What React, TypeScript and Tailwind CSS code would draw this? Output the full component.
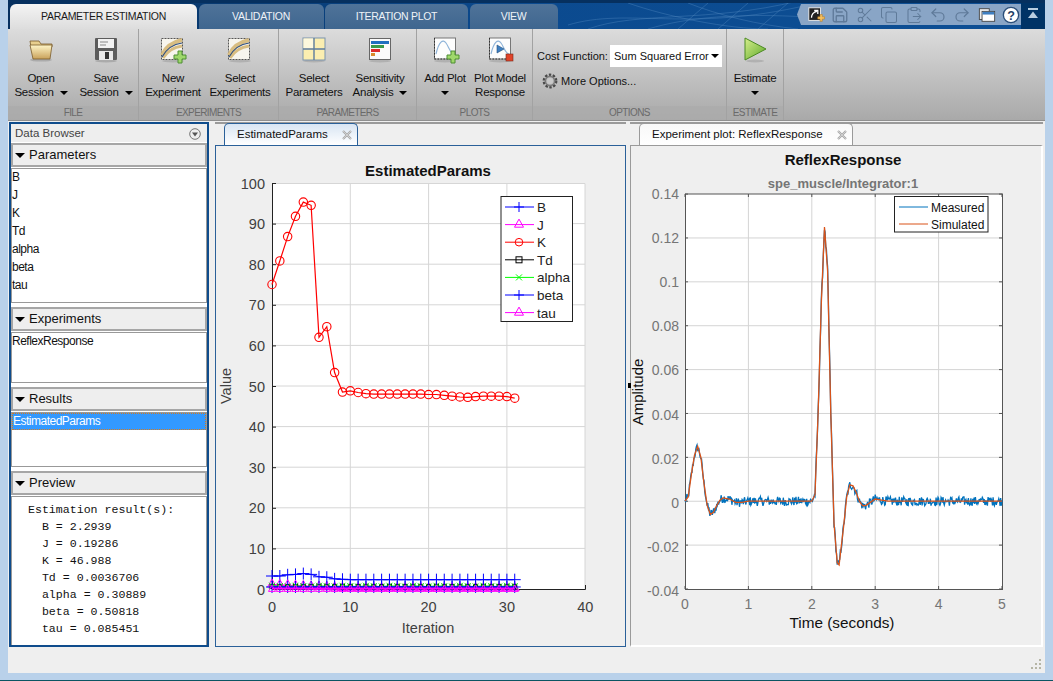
import React from "react";
import { Scissors, Copy, ClipboardPaste, Undo2, Redo2, Save } from "lucide-react";

const Caret = ({ className = "" }: { className?: string }) => (
  <span className={"inline-block w-0 h-0 border-l-[4px] border-r-[4px] border-t-[4px] border-l-transparent border-r-transparent border-t-black align-middle " + className} />
);

const Folder = () => (
  <svg width="32" height="32" viewBox="0 0 32 32">
    <defs>
      <linearGradient id="fd" x1="0" y1="0" x2="0" y2="1">
        <stop offset="0" stopColor="#fff6c8" />
        <stop offset="1" stopColor="#c9a15a" />
      </linearGradient>
    </defs>
    <ellipse cx="16" cy="27" rx="11" ry="1.6" fill="#8b8b8b" opacity="0.5" />
    <path d="M5 8h9l2 3h11v3H6z" fill="#e8cf8e" stroke="#7a5c2c" strokeWidth="0.8" />
    <path d="M5 12h22l-2 14H8z" fill="url(#fd)" stroke="#7a5c2c" strokeWidth="0.8" />
  </svg>
);

const Floppy = () => (
  <svg width="32" height="32" viewBox="0 0 32 32">
    <ellipse cx="16" cy="28" rx="11" ry="1.4" fill="#8b8b8b" opacity="0.5" />
    <rect x="5" y="5" width="22" height="22" rx="1" fill="#5c5c5c" />
    <rect x="8" y="6" width="16" height="9" fill="#f2f2f2" />
    <path d="M10 9h8M10 12h6" stroke="#888" strokeWidth="1" />
    <rect x="9" y="18" width="14" height="9" fill="#e8e8e8" />
    <rect x="15" y="19" width="4" height="7" fill="#333" />
  </svg>
);

const PlusMark = ({ x, y }: { x: number; y: number }) => (
  <path
    transform={`translate(${x} ${y})`}
    d="M4 0h4v4h4v4H8v4H4V8H0V4h4z"
    fill="#9fd86b"
    stroke="#4f8f35"
    strokeWidth="1"
  />
);

const Experiment = ({ plus }: { plus?: boolean }) => (
  <svg width="32" height="32" viewBox="0 0 32 32">
    <ellipse cx="16" cy="28" rx="11" ry="1.4" fill="#8b8b8b" opacity="0.4" />
    <rect x="4.5" y="5.5" width="21" height="21" fill="#f7f5ee" stroke="#555" strokeWidth="1" strokeDasharray="2 1" />
    <path d="M5 22C9 13 16 9 25 7" stroke="#d8bd82" strokeWidth="4" fill="none" />
    <path d="M6 25C11 17 17 14 25 13" stroke="#d8bd82" strokeWidth="3" fill="none" />
    <path d="M5 24C10 15 17 11 25 10" stroke="#2d4e80" strokeWidth="1.2" fill="none" />
    {plus && <PlusMark x={17} y={18} />}
  </svg>
);

const GridIcon = () => (
  <svg width="32" height="32" viewBox="0 0 32 32">
    <ellipse cx="16" cy="28" rx="11" ry="1.4" fill="#8b8b8b" opacity="0.4" />
    <rect x="5" y="5" width="22" height="22" fill="#fbeeb0" stroke="#7a94ad" />
    <rect x="5.5" y="5.5" width="10" height="10" fill="#fdf8dd" />
    <path d="M16 5v22M5 16h22" stroke="#5d7c9e" strokeWidth="1.4" />
  </svg>
);

const Bars = () => (
  <svg width="32" height="32" viewBox="0 0 32 32">
    <ellipse cx="16" cy="28" rx="11" ry="1.4" fill="#8b8b8b" opacity="0.4" />
    <rect x="5.5" y="5.5" width="21" height="21" fill="#fafafa" stroke="#666" />
    <rect x="7" y="8" width="18" height="3" fill="#1f6fc0" />
    <rect x="7" y="12" width="13" height="3" fill="#3a9a4a" />
    <rect x="7" y="16" width="9" height="3" fill="#dd2c2c" />
    <rect x="7" y="20" width="4" height="3" fill="#d98a2b" />
  </svg>
);

const PlotBase = ({ children }: { children?: React.ReactNode }) => (
  <svg width="32" height="32" viewBox="0 0 32 32">
    <ellipse cx="16" cy="28" rx="11" ry="1.4" fill="#8b8b8b" opacity="0.4" />
    <rect x="5.5" y="5" width="21" height="21" fill="#fdfdfd" stroke="#777" />
    <path d="M5.5 26h21M5.5 5v21" stroke="#333" strokeWidth="1" strokeDasharray="1.5 1.5" />
    <path d="M7 21C10 8 14 6 17 10S21 20 25 21" stroke="#8fb4d9" strokeWidth="1.2" fill="none" />
    {children}
  </svg>
);

const Gear = () => (
  <svg width="18" height="18" viewBox="0 0 18 18">
    <circle cx="9" cy="9" r="6.2" fill="none" stroke="#4a4a4a" strokeWidth="2.4" strokeDasharray="2.4 1.5" />
    <circle cx="9" cy="9" r="4.6" fill="none" stroke="#7a7a7a" strokeWidth="1.6" />
    <circle cx="9" cy="9" r="3" fill="#c9c9c9" />
  </svg>
);

const Play = () => (
  <svg width="32" height="32" viewBox="0 0 32 32">
    <defs>
      <linearGradient id="pl" x1="0" y1="0" x2="1" y2="1">
        <stop offset="0" stopColor="#d6ee8c" />
        <stop offset="1" stopColor="#5da92a" />
      </linearGradient>
    </defs>
    <ellipse cx="16" cy="28" rx="9" ry="1.4" fill="#8b8b8b" opacity="0.4" />
    <path d="M6 5L27 16L6 27z" fill="url(#pl)" stroke="#4b8a22" />
  </svg>
);

const RibbonBtn = ({ icon, lines, caret, w }: { icon: React.ReactNode; lines: [string, string?]; caret?: boolean; w: string }) => (
  <div className={"flex flex-col items-center pt-[4px] " + w}>
    <div className="h-[32px] w-[32px]">{icon}</div>
    <div className="mt-[6px] flex flex-col items-center text-[11.5px] tracking-[-0.25px] leading-[14px] text-[#111] whitespace-nowrap">
      <span>{lines[0]}</span>
      <span className="h-[14px]">
        {lines[1]}
        {caret && <Caret className={lines[1] ? "ml-[6px]" : ""} />}
      </span>
    </div>
  </div>
);

const Section = ({ label, w, children }: { label: string; w: string; children: React.ReactNode }) => (
  <div className={"flex flex-col h-full border-r border-r-[#a2a2a2] " + w}>
    <div className="flex-1 flex">{children}</div>
    <div className="h-[14px] bg-[#ababab]/70 text-center text-[10px] tracking-[-0.6px] leading-[14px] text-[#6a6a6a] uppercase">{label}</div>
  </div>
);

const TopTab = ({ label, w, active }: { label: string; w: string; active?: boolean }) => (
  <div
    className={
      "h-[25px] rounded-t-[6px] flex items-center justify-center text-[10.5px] tracking-[-0.3px] uppercase " +
      w +
      (active
        ? " bg-gradient-to-b from-[#f4f4f4] to-[#dddddd] text-[#1a1a1a]"
        : " bg-gradient-to-b from-[#4f7399] to-[#3f668f] text-[#eef3f8]")
    }
  >
    {label}
  </div>
);

const PanelHeader = ({ label }: { label: string }) => (
  <div className="h-[24px] border-2 border-[#a6a6a6] bg-[#eeeeee] flex items-center pl-[2px] text-[13px] text-[#111]">
    <span className="w-0 h-0 border-l-[5px] border-r-[5px] border-t-[5px] border-l-transparent border-r-transparent border-t-black mr-[4px]" />
    {label}
  </div>
);

const CloseX = () => (
  <svg width="10" height="10" viewBox="0 0 10 10" className="shrink-0">
    <path d="M1 1l8 8M9 1l-8 8" stroke="#a8a8a8" strokeWidth="2.2" />
    <path d="M1 1l8 8M9 1l-8 8" stroke="#dcdcdc" strokeWidth="0.7" />
  </svg>
);

const kVals = [75, 80.8, 86.8, 91.8, 95.3, 94.5, 62, 64.6, 53.3, 48.5, 48.8, 48.4, 48.1, 48, 48, 48, 48, 48, 48, 48, 47.9, 47.9, 47.7, 47.5, 47.3, 47.2, 47.4, 47.5, 47.5, 47.5, 47.4, 47];
const bVals = kVals.map((_, i) => [3.2, 3.2, 3.5, 3.6, 3.8, 3.6, 3.0, 2.9, 2.5, 2.4][i] ?? 2.3);
const jVals = kVals.map((_, i) => Math.max(0.2, 1.1 - i * 0.09));
const tdVals = kVals.map(() => 0.4);
const alphaVals = kVals.map((_, i) => 0.8 - (i % 3) * 0.1);
const betaVals = kVals.map(() => 0.5);
const tauVals = kVals.map(() => 0.1);

const lx = (i: number) => 272 + i * 7.83;
const ly = (v: number) => 589 - v * 4.06;
const poly = (vals: number[]) => vals.map((v, i) => `${lx(i).toFixed(1)},${ly(v).toFixed(1)}`).join(" ");

const plus = (x: number, y: number, r = 6) => `M${x - r} ${y}h${2 * r}M${x} ${y - r}v${2 * r}`;
const cross = (x: number, y: number, r = 3) => `M${x - r} ${y - r}l${2 * r} ${2 * r}M${x + r} ${y - r}l${-2 * r} ${2 * r}`;
const tri = (x: number, y: number, r = 4.5) => `M${x} ${y - r}L${x + r} ${y + r * 0.8}H${x - r}Z`;

const LeftLegend = [
  { n: "B", c: "#0000ff", m: "plus" },
  { n: "J", c: "#ff00ff", m: "tri" },
  { n: "K", c: "#ff0000", m: "circle" },
  { n: "Td", c: "#000000", m: "square" },
  { n: "alpha", c: "#00ff00", m: "cross" },
  { n: "beta", c: "#0000ff", m: "plus" },
  { n: "tau", c: "#ff00ff", m: "tri" },
];

const ChartLeft = () => (
  <svg viewBox="216 146 409 500" className="w-full h-full block font-[Liberation_Sans]">
    <text x="428" y="176" textAnchor="middle" fontSize="15" fontWeight="700" fill="#111">EstimatedParams</text>
    <rect x="272" y="183" width="313" height="406" fill="#fff" />
    {[10, 20, 30].map((g) => (
      <path key={g} d={`M${lx(g)} 183V589`} stroke="#d6d6d6" />
    ))}
    {[10, 20, 30, 40, 50, 60, 70, 80, 90].map((g) => (
      <path key={g} d={`M272 ${ly(g)}H585`} stroke="#d6d6d6" />
    ))}
    <path d="M272 183.5H585V589" fill="none" stroke="#d6d6d6" />
    <path d="M272.5 183V589.5H585.5V585" fill="none" stroke="#222" />
    {[0, 10, 20, 30, 40, 50, 60, 70, 80, 90, 100].map((g) => (
      <g key={g}>
        <path d={`M272 ${ly(g) + 0.5}h4`} stroke="#222" />
        <text x="265" y={ly(g) + 5.5} textAnchor="end" fontSize="14.5" fill="#404040">{g}</text>
      </g>
    ))}
    {[0, 10, 20, 30, 40].map((g) => (
      <text key={g} x={lx(g)} y="612" textAnchor="middle" fontSize="14.5" fill="#404040">{g}</text>
    ))}
    <text x="428" y="633" textAnchor="middle" fontSize="14.5" fill="#404040">Iteration</text>
    <text transform="translate(231 386) rotate(-90)" textAnchor="middle" fontSize="14.5" fill="#404040">Value</text>

    <polyline points={poly(kVals)} fill="none" stroke="#ff0000" strokeWidth="1.2" />
    {kVals.map((v, i) => (
      <circle key={i} cx={lx(i)} cy={ly(v)} r="4.2" fill="none" stroke="#ff0000" strokeWidth="1.1" />
    ))}
    <polyline points={poly(bVals)} fill="none" stroke="#0000ff" />
    {bVals.map((v, i) => (
      <path key={i} d={plus(lx(i), ly(v))} stroke="#0000ff" fill="none" />
    ))}
    <polyline points={poly(jVals)} fill="none" stroke="#ff00ff" />
    {jVals.map((v, i) => (
      <path key={i} d={tri(lx(i), ly(v) - 1)} stroke="#ff00ff" fill="none" />
    ))}
    <polyline points={poly(tdVals)} fill="none" stroke="#000" />
    {tdVals.map((v, i) => (
      <rect key={i} x={lx(i) - 2} y={ly(v) - 3} width="4" height="4" stroke="#000" fill="none" />
    ))}
    <polyline points={poly(alphaVals)} fill="none" stroke="#00ff00" />
    {alphaVals.map((v, i) => (
      <path key={i} d={cross(lx(i), ly(v))} stroke="#00ff00" fill="none" />
    ))}
    <polyline points={poly(betaVals)} fill="none" stroke="#0000ff" />
    {betaVals.map((v, i) => (
      <path key={i} d={plus(lx(i), ly(v))} stroke="#0000ff" fill="none" />
    ))}
    <polyline points={poly(tauVals)} fill="none" stroke="#ff00ff" strokeWidth="2" />
    {tauVals.map((v, i) => (
      <path key={i} d={tri(lx(i), ly(v), 3.5)} stroke="#ff00ff" fill="none" />
    ))}

    <rect x="501" y="196.5" width="71.5" height="125" fill="#fff" stroke="#222" />
    {LeftLegend.map((l, i) => {
      const y = 207 + i * 17.6;
      return (
        <g key={l.n + i}>
          <path d={`M505 ${y}H534`} stroke={l.c} />
          {l.m === "plus" && <path d={plus(519, y, 5)} stroke={l.c} />}
          {l.m === "tri" && <path d={tri(519, y - 1, 4.5)} stroke={l.c} fill="none" />}
          {l.m === "circle" && <circle cx="519" cy={y} r="3.8" stroke={l.c} fill="none" />}
          {l.m === "square" && <rect x="516" y={y - 3} width="6" height="6" stroke={l.c} fill="none" />}
          {l.m === "cross" && <path d={cross(519, y)} stroke={l.c} />}
          <text x="537" y={y + 5} fontSize="13.5" fill="#222">{l.n}</text>
        </g>
      );
    })}
  </svg>
);

const simKeys: [number, number][] = [
  [0, 0], [0.05, 0.002], [0.1, 0.012], [0.15, 0.021], [0.2, 0.025], [0.25, 0.02], [0.3, 0.008], [0.35, -0.002], [0.4, -0.006], [0.45, -0.005], [0.5, -0.002], [0.55, 0.0005], [0.6, 0.0015], [0.7, 0.001], [0.8, -0.0005], [0.9, -0.0005], [1.0, 0], [2.0, 0], [2.05, 0.003], [2.1, 0.04], [2.15, 0.09], [2.2, 0.125], [2.25, 0.105], [2.3, 0.04], [2.35, -0.01], [2.4, -0.028], [2.43, -0.029], [2.5, -0.012], [2.55, 0.002], [2.6, 0.0075], [2.65, 0.007], [2.7, 0.004], [2.75, 0], [2.8, -0.002], [2.85, -0.002], [2.9, -0.001], [3.0, 0.001], [3.1, 0.0005], [3.2, 0], [5, 0],
];
const rx = (t: number) => 685 + t * 63.4;
const ry = (v: number) => 589 - (v + 0.04) * 2194;
const interp = (t: number) => {
  for (let i = 1; i < simKeys.length; i++) {
    if (t <= simKeys[i][0]) {
      const [a, b] = simKeys[i - 1];
      const [c, d] = simKeys[i];
      return b + ((d - b) * (t - a)) / (c - a);
    }
  }
  return 0;
};
const measured = (() => {
  let s = 12345;
  const pts: string[] = [];
  for (let k = 0; k <= 500; k++) {
    s = (s * 1103515245 + 12345) % 2147483648;
    const n = (s / 2147483648 - 0.5) * 0.0042;
    const t = k * 0.01;
    pts.push(`${rx(t).toFixed(1)},${ry(interp(t) + n).toFixed(1)}`);
  }
  return pts.join(" ");
})();
const simulated = simKeys.map(([t, v]) => `${rx(t).toFixed(1)},${ry(v).toFixed(1)}`).join(" ");

const ChartRight = () => (
  <svg viewBox="631 146 410 499" className="w-full h-full block overflow-visible font-[Liberation_Sans]">
    <text x="843" y="165" textAnchor="middle" fontSize="15" fontWeight="700" fill="#111">ReflexResponse</text>
    <text x="843" y="188" textAnchor="middle" fontSize="13" fontWeight="700" fill="#757575">spe_muscle/Integrator:1</text>
    <rect x="685" y="194" width="317" height="395" fill="#fff" />
    {[1, 2, 3, 4].map((g) => (
      <path key={g} d={`M${rx(g)} 194V589`} stroke="#d4d4d4" />
    ))}
    {[-0.02, 0, 0.02, 0.04, 0.06, 0.08, 0.1, 0.12].map((g) => (
      <path key={g} d={`M685 ${ry(g)}H1002`} stroke="#d4d4d4" />
    ))}
    <rect x="685.5" y="194" width="317" height="395.5" fill="none" stroke="#555" />
    {[
      ["0.14", 0.14], ["0.12", 0.12], ["0.1", 0.1], ["0.08", 0.08], ["0.06", 0.06], ["0.04", 0.04], ["0.02", 0.02], ["0", 0], ["-0.02", -0.02], ["-0.04", -0.04],
    ].map(([l, v]) => (
      <g key={l as string}>
        <path d={`M685 ${ry(v as number)}h3M1002 ${ry(v as number)}h-3`} stroke="#555" />
        <text x="679" y={ry(v as number) + 5 + ((0.14 - (v as number)) / 0.18) * 2} textAnchor="end" fontSize="14" fill="#757575">{l}</text>
      </g>
    ))}
    {[0, 1, 2, 3, 4, 5].map((g) => (
      <g key={g}>
        <path d={`M${rx(g)} 589v-3M${rx(g)} 194v3`} stroke="#555" />
        <text x={rx(g)} y="609" textAnchor="middle" fontSize="14" fill="#757575">{g}</text>
      </g>
    ))}
    <text x="842" y="628" textAnchor="middle" fontSize="15.3" fill="#111">Time (seconds)</text>
    <text transform="translate(643 392) rotate(-90)" textAnchor="middle" fontSize="15" fill="#111">Amplitude</text>
    <polyline points={measured} fill="none" stroke="#0072bd" strokeWidth="1.3" />
    <polyline points={simulated} fill="none" stroke="#d95319" strokeWidth="1.3" />
    <rect x="894.5" y="196.5" width="93.5" height="35.5" fill="#fff" stroke="#222" />
    <path d="M899 207H928" stroke="#0072bd" />
    <path d="M899 224H928" stroke="#d95319" />
    <text x="931" y="211.5" fontSize="12" fill="#111">Measured</text>
    <text x="931" y="228.5" fontSize="12" fill="#111">Simulated</text>
  </svg>
);

export default function App() {
  const preview = [
    "Estimation result(s):",
    "  B = 2.2939",
    "  J = 0.19286",
    "  K = 46.988",
    "  Td = 0.0036706",
    "  alpha = 0.30889",
    "  beta = 0.50818",
    "  tau = 0.085451",
  ];
  return (
    <div className="w-[1053px] h-[681px] overflow-hidden bg-[#b9d1ea] px-2 pb-[7px] border-b border-b-[#0b5563] flex flex-col font-[Liberation_Sans]">
      {/* Tab bar */}
      <div className="relative h-[29px] shrink-0 bg-gradient-to-r from-[#06305f] via-[#0b4a8f] to-[#0d4f95] flex items-start pl-[2px] border-t-[3px] border-t-[#06305f] pt-[1px] overflow-hidden">
        <svg className="absolute left-[560px] top-0" width="240" height="26" viewBox="0 0 240 26">
          <path d="M0 22C60 4 120 30 240 2M20 26C70 8 140 20 230 -2M80 26C120 14 170 10 240 14M120 0C150 12 190 22 230 26M60 0C100 14 160 26 200 26M180 0L150 26M220 0L190 26M140 0L110 26" stroke="#4f86bf" strokeWidth="0.6" fill="none" opacity="0.7" />
        </svg>
        <div className="relative flex gap-[1.5px]">
          <TopTab label="Parameter Estimation" w="w-[187px]" active />
          <TopTab label="Validation" w="w-[125px]" />
          <TopTab label="Iteration Plot" w="w-[143px]" />
          <TopTab label="View" w="w-[88px]" />
        </div>
        <div className="absolute right-0 top-0 bottom-0 w-[24px] bg-[#003366] flex items-center justify-center">
          <svg width="12" height="12" viewBox="0 0 12 12" className="mb-[5px]">
            <rect x="1" y="0" width="10" height="2" fill="#b9cde0" />
            <path d="M6 3.5L11 10H1z" fill="#b9cde0" />
          </svg>
        </div>
        <div className="absolute right-[24px] top-[1px] h-[21px] w-[224px] bg-[#89a5c6] [clip-path:polygon(4px_0,100%_0,100%_100%,4px_100%,0_50%)] flex items-center pl-[10px] gap-[6.4px] text-[#5f7a99]">
          <svg width="18" height="18" viewBox="0 0 20 20">
            <rect x="2" y="2" width="13" height="14" fill="#222" stroke="#eee" />
            <path d="M5 13C5 9 7 7 11 6M8 5h4v4" stroke="#fff" strokeWidth="1.4" fill="none" />
            <path d="M12 12h2.5v-2.5h2.5V12H19.5v2.5H17V17h-2.5v-2.5H12z" fill="#f5c060" stroke="#b97a20" strokeWidth="0.6" />
          </svg>
          <Save size={18} strokeWidth={1.8} />
          <Scissors size={18} strokeWidth={1.4} />
          <Copy size={18} strokeWidth={1.4} />
          <ClipboardPaste size={18} strokeWidth={1.4} />
          <Undo2 size={18} strokeWidth={1.6} />
          <Redo2 size={18} strokeWidth={1.6} />
          <svg width="18" height="18" viewBox="0 0 20 20">
            <rect x="1.5" y="3" width="11" height="12" fill="#eee" stroke="#444" />
            <rect x="4.5" y="6" width="14" height="11" fill="#fff" stroke="#444" />
            <rect x="5" y="6.5" width="13" height="3" fill="#3f7fc1" />
          </svg>
          <svg width="18" height="18" viewBox="0 0 20 20">
            <circle cx="10" cy="10" r="8.5" fill="#fff" stroke="#2b4f7a" strokeWidth="1.5" />
            <text x="10" y="15" textAnchor="middle" fontSize="14" fontWeight="700" fill="#1f3f66">?</text>
          </svg>
        </div>
      </div>

      {/* Ribbon */}
      <div className="h-[92px] shrink-0 flex bg-gradient-to-b from-[#dcdcdc] to-[#a9a9a9] border-b border-b-[#8f8f8f]">
        <Section label="File" w="w-[131px]">
          <RibbonBtn w="w-[66px]" icon={<Folder />} lines={["Open", "Session"]} caret />
          <RibbonBtn w="w-[64px]" icon={<Floppy />} lines={["Save", "Session"]} caret />
        </Section>
        <Section label="Experiments" w="w-[140px]">
          <RibbonBtn w="w-[68px]" icon={<Experiment plus />} lines={["New", "Experiment"]} />
          <RibbonBtn w="w-[66px]" icon={<Experiment />} lines={["Select", "Experiments"]} />
        </Section>
        <Section label="Parameters" w="w-[138px]">
          <RibbonBtn w="w-[70px]" icon={<GridIcon />} lines={["Select", "Parameters"]} />
          <RibbonBtn w="w-[62px]" icon={<Bars />} lines={["Sensitivity", "Analysis"]} caret />
        </Section>
        <Section label="Plots" w="w-[116px]">
          <RibbonBtn w="w-[56px]" icon={<PlotBase><PlusMark x={18} y={18} /></PlotBase>} lines={["Add Plot"]} caret />
          <RibbonBtn
            w="w-[54px]"
            icon={
              <PlotBase>
                <path d="M13 12l7 4-7 4z" fill="#3f7fc1" stroke="#1f4f80" strokeWidth="0.6" />
                <rect x="22" y="21" width="7" height="7" fill="#e0442a" stroke="#7a2a1a" strokeWidth="0.6" />
              </PlotBase>
            }
            lines={["Plot Model", "Response"]}
          />
        </Section>
        <Section label="Options" w="w-[194px]">
          <div className="flex flex-col pl-[4px] pt-[16px] text-[11px] text-[#111] whitespace-nowrap">
            <div className="flex items-center">
              <span className="w-[73px]">Cost Function:</span>
              <div className="h-[22px] w-[112px] bg-white flex items-center justify-between pl-[4px] pr-[3px]">
                <span>Sum Squared Error</span>
                <Caret className="border-t-[#222]" />
              </div>
            </div>
            <div className="flex items-center gap-[2px] mt-[5px] pl-[4px]">
              <Gear />
              <span>More Options...</span>
            </div>
          </div>
        </Section>
        <Section label="Estimate" w="w-[57px]">
          <RibbonBtn w="w-[56px]" icon={<Play />} lines={["Estimate"]} caret />
        </Section>
      </div>

      {/* Content */}
      <div className="flex-1 min-h-0 bg-[#efefef] flex flex-col">
        <div className="h-[525px] mt-px flex">
          {/* Left */}
          <div className="ml-px w-[200px] border-2 border-[#0f4c8c] bg-white flex flex-col text-[12px] tracking-[-0.5px] text-[#111]">
            <div className="h-[18px] bg-[#eeeeee] flex items-center justify-between pl-[4px] pr-[6px] pt-px text-[11.5px] tracking-normal text-[#444]">
              <span>Data Browser</span>
              <svg width="12" height="12" viewBox="0 0 12 12">
                <circle cx="6" cy="6" r="5.3" fill="#eee" stroke="#777" />
                <path d="M3 4.5h6L6 8.5z" fill="#555" />
              </svg>
            </div>
            <div className="mt-px tracking-normal">
              <PanelHeader label="Parameters" />
            </div>
            <div className="mt-px h-[135px] border border-[#999999] leading-[17px]">
              {["B", "J", "K", "Td", "alpha", "beta", "tau"].map((p) => (
                <div key={p} className="h-[18px]">{p}</div>
              ))}
            </div>
            <div className="mt-[4px] tracking-normal">
              <PanelHeader label="Experiments" />
            </div>
            <div className="mt-px h-[51px] border border-[#999999] leading-[17px]">ReflexResponse</div>
            <div className="mt-[4px] tracking-normal">
              <PanelHeader label="Results" />
            </div>
            <div className="mt-px h-[55px] border border-[#999999]">
              <div className="h-[17px] bg-[#3399ff] text-white leading-[15px] border border-dotted border-[#d97a1a]">EstimatedParams</div>
            </div>
            <div className="mt-[4px] tracking-normal">
              <PanelHeader label="Preview" />
            </div>
            <div className="mt-px flex-1 border border-[#999999] border-b-0 pt-[4px] pl-[16px] font-[Liberation_Mono] text-[11.6px] tracking-normal leading-[17px] whitespace-pre text-[#111]">
              {preview.map((l) => (
                <div key={l}>{l}</div>
              ))}
            </div>
          </div>

          {/* Center */}
          <div className="ml-[6px] w-[411px] flex flex-col">
            <div className="h-[23px] pl-[9px] border-t-2 border-t-[#9a9a9a] flex items-end">
              <div className="h-[22px] w-[134px] rounded-t-[5px] border border-[#2a6099] border-b-0 bg-gradient-to-b from-[#d8e5f3] to-white flex items-center justify-between pl-[12px] pr-[5px] text-[11.5px] text-[#111]">
                <span>EstimatedParams</span>
                <CloseX />
              </div>
            </div>
            <div className="flex-1 min-h-0 border border-[#2a6099]">
              <ChartLeft />
            </div>
          </div>

          {/* Right */}
          <div className="relative ml-[4px] flex-1 flex flex-col mr-[2px]">
            <div className="h-[23px] pl-[9px] border-t-2 border-t-[#9a9a9a] flex items-end">
              <div className="h-[22px] w-[214px] rounded-t-[5px] border border-[#9a9a9a] border-b-0 bg-gradient-to-b from-[#f8f8f8] to-white flex items-center justify-between pl-[12px] pr-[5px] text-[11.5px] text-[#111]">
                <span>Experiment plot: ReflexResponse</span>
                <CloseX />
              </div>
            </div>
            <div className="flex-1 min-h-0 border-l border-t border-[#9a9a9a] border-r-2 border-r-white border-b-2 border-b-white">
              <ChartRight />
            </div>
            <span className="absolute left-[-2px] top-[261px] w-[3px] h-[5px] bg-black" />
          </div>
        </div>

        {/* Status */}
        <div className="flex-1 flex justify-end items-end pr-[3px] pb-[3px]">
          <svg width="11" height="11" viewBox="0 0 11 11">
            <g fill="#b5b5a5">
              <rect x="8" y="0" width="2" height="2" />
              <rect x="4" y="4" width="2" height="2" />
              <rect x="8" y="4" width="2" height="2" />
              <rect x="0" y="8" width="2" height="2" />
              <rect x="4" y="8" width="2" height="2" />
              <rect x="8" y="8" width="2" height="2" />
            </g>
          </svg>
        </div>
      </div>
    </div>
  );
}
